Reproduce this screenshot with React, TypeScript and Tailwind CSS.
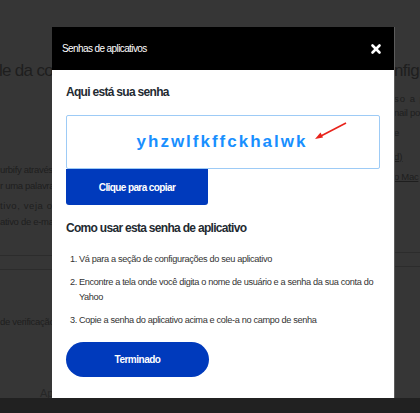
import { X } from 'lucide-react'

const steps = [
  { n: '1.', text: 'Vá para a seção de configurações do seu aplicativo' },
  { n: '2.', text: 'Encontre a tela onde você digita o nome de usuário e a senha da sua conta do Yahoo' },
  { n: '3.', text: 'Copie a senha do aplicativo acima e cole-a no campo de senha' },
]

function BackgroundPage() {
  return (
    <div className="flex h-[398px] text-[#1e1e1e]">
      {/* left column, mostly hidden behind the modal */}
      <div className="w-[60px] overflow-hidden">
        <div className="ml-[-1px] mt-[58px] whitespace-nowrap text-[17px] tracking-[-0.7px]">le da conta</div>
        <div className="mt-[80px] space-y-[5px] whitespace-nowrap text-[9.5px] leading-[11px] tracking-[-0.3px]">
          <p>urbify através</p>
          <p>r uma palavra</p>
          <p className="pt-[4px] tracking-[0.6px]">tivo, veja os</p>
          <p>ativo de e-mail</p>
        </div>
        <div className="mt-[28px] h-[15px] border-y border-[#2c2c2c]" />
        <div className="mt-[45px] whitespace-nowrap text-[9.5px] tracking-[-0.3px]">de verificação</div>
        <div className="ml-[40px] mt-[56px] text-[11px] text-[#262626]">Ap</div>
        <div className="mt-[2px] flex gap-[22px]">
          <div className="h-[12px] w-[18px] border border-[#2e2e2e]" />
          <div className="h-[12px] w-[18px] border border-[#2e2e2e]" />
        </div>
      </div>
      <div className="flex-1" />
      {/* right column */}
      <div className="w-[26px] overflow-hidden">
        <div className="mt-[58px] whitespace-nowrap text-[17px] tracking-[-0.6px]">nfigu</div>
        <div className="mt-[9px] space-y-[3px] whitespace-nowrap text-[9.5px] leading-[11px]">
          <p className="tracking-[1px]">so a p</p>
          <p className="tracking-[-0.3px]">nail pop</p>
          <p className="pt-[6px]">e</p>
          <p className="pt-[10px] underline">d)</p>
          <p className="pt-[6px] underline tracking-[-0.3px]">o Mac</p>
        </div>
        <div className="mt-[70px] h-[15px] border-y border-[#2c2c2c]" />
      </div>
    </div>
  )
}

export default function App() {
  return (
    <div className="relative h-[413px] w-[420px] overflow-hidden bg-[#363636] font-['Liberation_Sans',Arial,sans-serif]">
      <BackgroundPage />
      <div className="h-[15px] bg-[#212121]" />

      {/* Modal */}
      <div className="absolute left-[52px] top-[27px] flex h-[371px] w-[343px] flex-col border-r border-[#5c5c5c] bg-white">
        <div className="flex h-[43px] items-center justify-between bg-black pl-[10px] pr-[11px]">
          <span className="text-[10px] tracking-[-0.6px] text-white">Senhas de aplicativos</span>
          <X className="h-[14px] w-[14px] text-white" strokeWidth={4.5} />
        </div>

        <div className="flex flex-col px-[14px] pt-[15px]">
          <h2 className="text-[12px] font-bold leading-[15px] tracking-[-0.7px] text-[#232a31]">Aqui está sua senha</h2>

          <div className="relative mt-[15px] flex h-[54px] items-center justify-center rounded-[2px] border border-[#9dcbf6]">
            <span className="pr-[2px] text-[17px] font-bold tracking-[2px] text-[#188fff]">yhzwlfkffckhalwk</span>
            {/* red annotation arrow */}
            <svg className="absolute left-[246px] top-[5px]" width="36" height="20" viewBox="0 0 36 20">
              <line x1="33" y1="2" x2="6" y2="16" stroke="#e8231b" strokeWidth="1.6" />
              <path d="M2 18 L7.5 11.5 L10 16.5 Z" fill="#e8231b" />
            </svg>
          </div>

          <button className="flex h-[36px] w-[142px] items-center justify-center rounded-b-[3px] bg-[#003abc] text-[10px] font-bold tracking-[-0.6px] text-white">
            Clique para copiar
          </button>

          <h2 className="mt-[16px] text-[12px] font-bold leading-[15px] tracking-[-0.7px] text-[#232a31]">
            Como usar esta senha de aplicativo
          </h2>

          <ol className="mt-[16px] space-y-[8px] pl-[4px] text-[9.2px] leading-[15px] tracking-[-0.35px] text-[#333]">
            {steps.map(s => (
              <li key={s.n} className="flex">
                <span className="w-[7px] shrink-0">{s.n}</span>
                <span className="pl-[2px] pr-[6px]">{s.text}</span>
              </li>
            ))}
          </ol>

          <button className="mt-[14px] flex h-[35px] w-[143px] items-center justify-center rounded-full bg-[#003abc] text-[10px] font-bold tracking-[-0.5px] text-white">
            Terminado
          </button>
        </div>
      </div>
    </div>
  )
}
